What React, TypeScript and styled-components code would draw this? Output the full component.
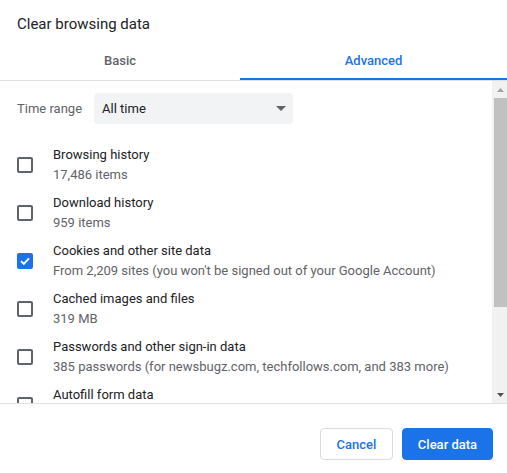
import React from 'react';
import styled, { createGlobalStyle } from 'styled-components';

const GlobalStyle = createGlobalStyle`
  html, body {
    margin: 0;
    padding: 0;
    background: #ffffff;
  }
  body {
    font-family: Roboto, "Liberation Sans", sans-serif;
    color: #202124;
  }
`;

const options = [
  { label: 'Browsing history', detail: '17,486 items', checked: false },
  { label: 'Download history', detail: '959 items', checked: false },
  {
    label: 'Cookies and other site data',
    detail: "From 2,209 sites (you won't be signed out of your Google Account)",
    checked: true,
  },
  { label: 'Cached images and files', detail: '319 MB', checked: false },
  {
    label: 'Passwords and other sign-in data',
    detail: '385 passwords (for newsbugz.com, techfollows.com, and 383 more)',
    checked: false,
  },
  { label: 'Autofill form data', detail: '6 suggestions', checked: false },
  { label: 'Site Settings', detail: '12 sites', checked: false },
  { label: 'Hosted app data', detail: '5 apps (Chrome Web Store, Docs, Gmail, and 2 more)', checked: false },
];

const App = () => {
  return (
    <>
      <GlobalStyle />
      <Dialog>
        <Title>Clear browsing data</Title>
        <TabBar>
          <Tab $width="240px">Basic</Tab>
          <Tab $active>Advanced</Tab>
        </TabBar>
        <ScrollFrame>
          <ScrollContent>
            <TimeRangeRow>
              <FieldLabel>Time range</FieldLabel>
              <Select>
                <span>All time</span>
                <Caret />
              </Select>
            </TimeRangeRow>
            {options.map((option) => (
              <OptionRow key={option.label}>
                <Checkbox $checked={option.checked}>
                  {option.checked && (
                    <svg width="12" height="12" viewBox="0 0 12 12">
                      <polyline
                        points="2,6.2 4.8,9 10,3.4"
                        fill="none"
                        stroke="#ffffff"
                        strokeWidth="1.9"
                      />
                    </svg>
                  )}
                </Checkbox>
                <OptionText>
                  <OptionLabel>{option.label}</OptionLabel>
                  <OptionDetail>{option.detail}</OptionDetail>
                </OptionText>
              </OptionRow>
            ))}
          </ScrollContent>
          <Scrollbar>
            <ScrollButton>
              <svg width="7" height="4" viewBox="0 0 7 4">
                <polygon points="0,4 7,4 3.5,0" fill="#a3a3a3" />
              </svg>
            </ScrollButton>
            <ScrollTrack>
              <ScrollThumb />
            </ScrollTrack>
            <ScrollButton>
              <svg width="7" height="4" viewBox="0 0 7 4">
                <polygon points="0,0 7,0 3.5,4" fill="#505050" />
              </svg>
            </ScrollButton>
          </Scrollbar>
        </ScrollFrame>
        <Footer>
          <Button $width="73px">Cancel</Button>
          <Button $primary $width="91px">Clear data</Button>
        </Footer>
      </Dialog>
    </>
  );
};

const Dialog = styled.div`
  width: 507px;
  height: 473px;
  display: flex;
  flex-direction: column;
  background: #ffffff;
`;

const Title = styled.div`
  padding: 13px 17px 5px;
  font-size: 15px;
  line-height: 22px;
  color: #202124;
`;

const TabBar = styled.div`
  display: flex;
  border-bottom: 1px solid #e0e0e0;
`;

const Tab = styled.div<{ $active?: boolean; $width?: string }>`
  box-sizing: border-box;
  height: 40px;
  padding-top: 2px;
  ${(props) => (props.$width ? `width: ${props.$width};` : 'flex: 1;')}
  display: flex;
  align-items: center;
  justify-content: center;
  font-size: 13px;
  font-weight: 500;
  color: ${(props) => (props.$active ? '#1a73e8' : '#5f6368')};
  border-bottom: 2px solid ${(props) => (props.$active ? '#1a73e8' : 'transparent')};
`;

const ScrollFrame = styled.div`
  display: flex;
  height: 322px;
  border-bottom: 1px solid #e0e0e0;
`;

const ScrollContent = styled.div`
  flex: 1;
  min-width: 0;
  overflow: hidden;
  padding-top: 12px;
`;

const Scrollbar = styled.div`
  width: 15px;
  flex: none;
  display: flex;
  flex-direction: column;
  background: #f1f1f1;
`;

const ScrollButton = styled.div`
  height: 17px;
  flex: none;
  display: flex;
  align-items: center;
  justify-content: center;
  padding-left: 1px;
`;

const ScrollTrack = styled.div`
  flex: 1;
`;

const ScrollThumb = styled.div`
  height: 209px;
  margin-left: 2px;
  background: #c1c1c1;
`;

const TimeRangeRow = styled.div`
  display: flex;
  align-items: center;
  padding: 0 17px;
  gap: 12px;
  margin-bottom: 17px;
`;

const FieldLabel = styled.span`
  font-size: 13px;
  color: #5f6368;
`;

const Select = styled.div`
  width: 199px;
  height: 31px;
  box-sizing: border-box;
  padding: 0 8px;
  border-radius: 4px;
  background: #f1f3f4;
  display: flex;
  align-items: center;
  justify-content: space-between;
  font-size: 13px;
  color: #202124;
`;

const Caret = styled.span`
  width: 0;
  height: 0;
  border-left: 5px solid transparent;
  border-right: 5px solid transparent;
  border-top: 5px solid #5f6368;
  margin-right: -1px;
`;

const OptionRow = styled.div`
  display: flex;
  align-items: center;
  gap: 20px;
  padding: 4px 17px;
`;

const Checkbox = styled.span<{ $checked: boolean }>`
  box-sizing: border-box;
  width: 16px;
  height: 16px;
  flex: none;
  border-radius: 2px;
  border: 2px solid ${(props) => (props.$checked ? '#1a73e8' : '#5f6368')};
  background: ${(props) => (props.$checked ? '#1a73e8' : 'transparent')};
  display: flex;
  align-items: center;
  justify-content: center;
`;

const OptionText = styled.div`
  display: flex;
  flex-direction: column;
  font-size: 13px;
  line-height: 20px;
  white-space: nowrap;
`;

const OptionLabel = styled.span`
  color: #202124;
`;

const OptionDetail = styled.span`
  color: #5f6368;
`;

const Footer = styled.div`
  display: flex;
  justify-content: flex-end;
  gap: 9px;
  padding: 24px 14px 0;
`;

const Button = styled.button<{ $primary?: boolean; $width: string }>`
  box-sizing: border-box;
  width: ${(props) => props.$width};
  height: 32px;
  padding: 0;
  border-radius: 4px;
  font-family: Roboto, "Liberation Sans", sans-serif;
  font-size: 13px;
  font-weight: 500;
  border: 1px solid ${(props) => (props.$primary ? '#1a73e8' : '#dadce0')};
  background: ${(props) => (props.$primary ? '#1a73e8' : '#ffffff')};
  color: ${(props) => (props.$primary ? '#ffffff' : '#1a73e8')};
  cursor: pointer;
`;

export default App;
